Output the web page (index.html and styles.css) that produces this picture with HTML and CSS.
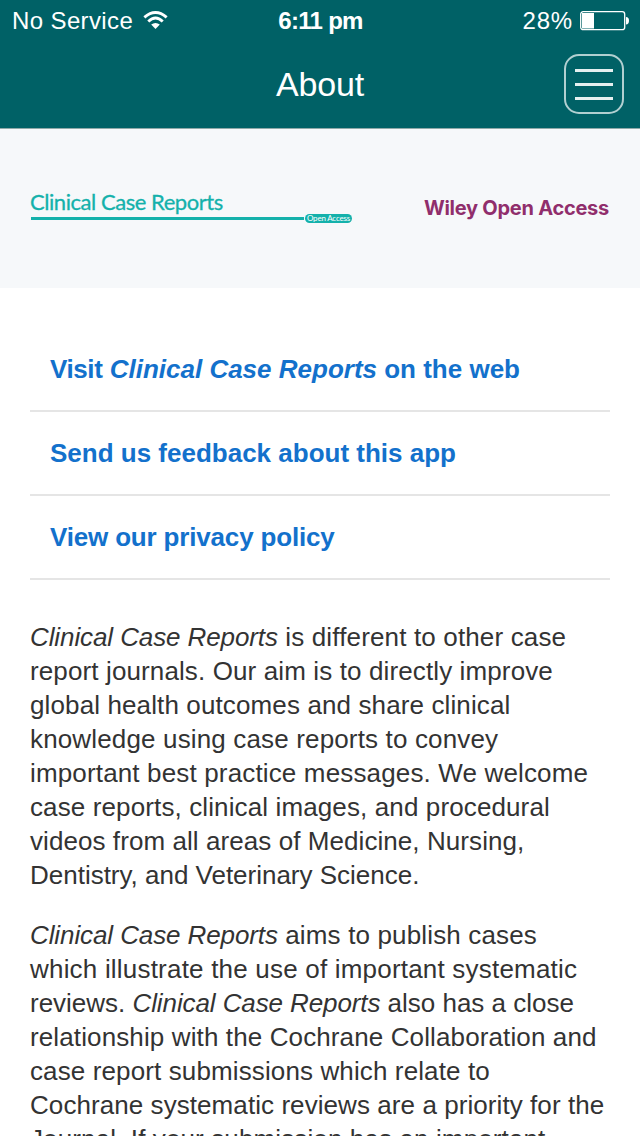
FILE: index.html
```html
<!DOCTYPE html>
<html lang="en">
<head>
<meta charset="utf-8">
<title>About</title>
<link rel="stylesheet" href="styles.css">
</head>
<body>
<header class="header">
  <div class="status">
    <div class="carrier"><span class="carrier-name">No Service</span>
      <svg class="wifi" width="25" height="20" viewBox="0 0 26 20" fill="none" stroke="#fff" stroke-width="3"><path d="M1.4 7.3Q13 -2.7 24.6 7.3M5.5 11.6Q13 4.400 20.5 11.6"/><path d="M8.5 14.8Q13 11.200 17.5 14.8L13 19.300Z" fill="#fff" stroke="none"/></svg>
    </div>
    <div class="clock">6:11 pm</div>
    <div class="power"><span class="percent">28%</span>
      <svg width="49" height="20" viewBox="0 0 49 20"><rect x=".7" y=".7" width="44" height="18" rx="2.5" fill="none" stroke="#fff" stroke-width="1.3"/><path d="M2 2h12v15.500H2zM46 6q3 0 3 3.700t-3 3.700z" fill="#fff"/></svg>
    </div>
  </div>
  <div class="navbar">
    <h1 class="title">About</h1>
    <button class="menu" aria-label="Menu"><span class="bar"></span><span class="bar"></span><span class="bar"></span></button>
  </div>
</header>
<section class="brands">
  <div class="journal">
    <div class="journal-name">Clinical Case Reports</div>
    <div class="journal-line"><span class="rule"></span><span class="badge">Open Access</span></div>
  </div>
  <div class="wiley">Wiley Open Access</div>
</section>
<main class="content">
  <nav class="links">
    <a class="link"><span class="lead">Visit</span> <i>Clinical Case Reports</i> on the web</a>
    <a class="link">Send us feedback about this app</a>
    <a class="link tight">View our privacy policy</a>
  </nav>
  <p class="para"><span class="line wide"><i>Clinical Case Reports</i> is different to other case</span> <span class="line">report journals. Our aim is to directly improve</span> <span class="line">global health outcomes and share clinical</span> <span class="line wide">knowledge using case reports to convey</span> <span class="line wide">important best practice messages. We welcome</span> <span class="line">case reports, clinical images, and procedural</span> <span class="line snug">videos from all areas of Medicine, Nursing,</span> <span class="line normal">Dentistry, and Veterinary Science.</span></p>
  <p class="para"><span class="line wide"><i>Clinical Case Reports</i> aims to publish cases</span> <span class="line wider">which illustrate the use of important systematic</span> <span class="line normal">reviews. <i>Clinical Case Reports</i> also has a close</span> <span class="line">relationship with the Cochrane Collaboration and</span> <span class="line">case report submissions which relate to</span> <span class="line snug">Cochrane systematic reviews are a priority for the</span> <span class="line">Journal. If your submission has an important</span></p>
</main>
</body>
</html>
```
FILE: styles.css
```css
* { box-sizing: border-box; }
body { margin: 0; height: 1136px; overflow: hidden; background: #fff; color: #333; font-family: "Liberation Sans", Arial, sans-serif; }
.header { height: 129px; background: #006166; color: #fff; border-bottom: 1px solid #8fa9a9; }
.status { height: 40px; display: grid; grid-template-columns: 1fr auto 1fr; align-items: center; padding: 2px 11px 0 12px; font-size: 24px; line-height: 38px; }
.carrier, .power { display: flex; align-items: center; }
.carrier { gap: 10px; }
.carrier-name { letter-spacing: .38px; }
.wifi { position: relative; top: -1px; }
.clock { font-weight: bold; letter-spacing: -.7px; }
.power { justify-content: flex-end; gap: 7px; }
.percent { letter-spacing: .8px; }
.navbar { height: 88px; display: grid; grid-template-columns: 1fr auto 1fr; align-items: center; padding: 0 16px; }
.title { grid-column: 2; margin: 0; font-size: 34px; font-weight: normal; letter-spacing: -.2px; }
.menu { justify-self: end; width: 60px; height: 60px; padding: 0; border: 2px solid #b2d0d1; border-radius: 15px; background: transparent; display: flex; flex-direction: column; align-items: center; justify-content: center; gap: 11px; }
.bar { width: 38px; height: 3px; background: #e5f0f0; }
.brands { height: 159px; background: #f6f8fa; display: flex; justify-content: space-between; padding: 61px 31px 0 30px; }
.journal { width: 322px; color: #14b1ab; }
.journal-name { font-family: Lato, sans-serif; font-size: 22px; line-height: 24px; letter-spacing: -.45px; -webkit-text-stroke: .3px #14b1ab; white-space: nowrap; }
.journal-line { display: flex; align-items: center; gap: 1px; height: 8px; padding-left: 1px; }
.rule { flex: 1; height: 3px; background: #14b1ab; }
.badge { width: 47px; height: 9px; border-radius: 5px; background: #14b1ab; color: #fff; font: 8px/9px Lato, sans-serif; letter-spacing: -.2px; text-align: center; white-space: nowrap; }
.wiley { color: #902e6c; font: bold 20px/36px Inter, sans-serif; letter-spacing: -.25px; white-space: nowrap; }
.content { padding: 40px 30px 0; }
.link { display: block; height: 84px; padding: 0 20px; border-bottom: 2px solid #e5e5e5; color: #1371cc; font-size: 26px; font-weight: bold; line-height: 83px; white-space: nowrap; }
.lead { letter-spacing: -.4px; }
.tight { letter-spacing: -.17px; }
.links { margin-bottom: 40px; }
.para { margin: 0 0 26px; font-size: 26px; line-height: 34px; }
.line { display: block; white-space: nowrap; letter-spacing: .12px; }
.wide { letter-spacing: .15px; }
.wider { letter-spacing: .2px; }
.snug { letter-spacing: .07px; }
.normal { letter-spacing: -.01px; }
.para i { letter-spacing: -.1px; }
```
